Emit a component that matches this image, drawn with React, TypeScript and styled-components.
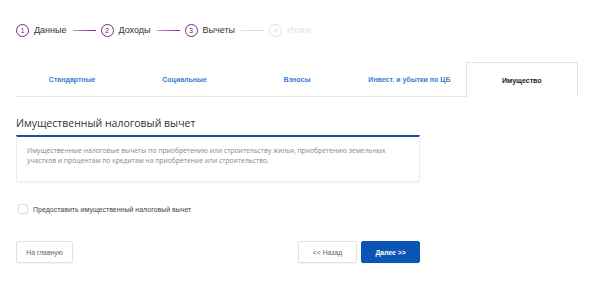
import React, { useState } from 'react'
import styled, { createGlobalStyle } from 'styled-components'

const GlobalStyle = createGlobalStyle`
  html, body {
    margin: 0;
    padding: 0;
    background: #ffffff;
    font-family: "Liberation Sans", Arial, sans-serif;
  }
  * { box-sizing: border-box; }
`

const Page = styled.div`
  width: 600px;
  height: 291px;
  padding: 0 22px 0 16px;
  overflow: hidden;
`

const Stepper = styled.div`
  display: flex;
  align-items: center;
  height: 36px;
  margin-top: 12px;
`

const Step = styled.div<{ $done: boolean }>`
  display: flex;
  align-items: center;
  gap: 5px;
  font-size: 9px;
  color: ${p => (p.$done ? '#333333' : '#e2e2e2')};
`

const StepCircle = styled.span<{ $done: boolean }>`
  width: 13px;
  height: 13px;
  border-radius: 50%;
  border: 1.5px solid ${p => (p.$done ? '#8a1c8e' : '#e4e4e4')};
  color: ${p => (p.$done ? '#333333' : '#e4e4e4')};
  font-size: 6.5px;
  display: flex;
  align-items: center;
  justify-content: center;
`

const StepLine = styled.span<{ $done: boolean }>`
  width: 23px;
  height: 1px;
  margin: 0 5px 0 6px;
  background: ${p => (p.$done ? 'linear-gradient(90deg, #c59cc6, #8a1c8e)' : '#dddddd')};
`

const Tabs = styled.div`
  display: grid;
  grid-template-columns: repeat(5, 1fr);
  margin-top: 14px;
  height: 35px;
`

const Tab = styled.div<{ $active: boolean }>`
  display: flex;
  align-items: center;
  justify-content: center;
  font-size: 7px;
  font-weight: bold;
  color: ${p => (p.$active ? '#222222' : '#2f7fd1')};
  ${p =>
    p.$active
      ? 'border: 1px solid #e3e3e3; border-bottom: none;'
      : 'border-bottom: 1px solid #e6e6e6;'}
  padding-top: 1px;
`

const Section = styled.div`
  width: 404px;
  margin-top: 18px;
`

const Heading = styled.h2`
  margin: 0;
  font-family: "Open Sans", "Liberation Sans", sans-serif;
  font-weight: normal;
  font-size: 10.5px;
  color: #333333;
  line-height: 16px;
  padding-bottom: 4px;
`

const InfoBox = styled.div`
  border-top: 2px solid #1b4ea3;
  border-left: 1px solid #ececec;
  border-right: 1px solid #ececec;
  border-bottom: 1px solid #ececec;
  box-shadow: 0 1px 2px rgba(0, 0, 0, 0.04);
  padding: 9px 24px 0 10px;
  height: 47px;
  font-family: "Open Sans", "Liberation Sans", sans-serif;
  font-size: 6.75px;
  line-height: 10px;
  color: #888888;
`

const CheckRow = styled.label`
  display: flex;
  align-items: center;
  gap: 5px;
  margin-top: 22px;
  margin-left: 2px;
  font-size: 7px;
  color: #444444;
  cursor: pointer;
`

const Box = styled.span<{ $checked: boolean }>`
  width: 10px;
  height: 10px;
  border: 1px solid #dcdcdc;
  border-radius: 2px;
  background: ${p => (p.$checked ? '#0b56b5' : '#ffffff')};
`

const Buttons = styled.div`
  display: flex;
  width: 404px;
  margin-top: 27px;
  gap: 4px;
`

const Button = styled.button<{ $primary?: boolean }>`
  height: 22px;
  padding: 0;
  width: 59px;
  border-radius: 2px;
  font-family: "Liberation Sans", Arial, sans-serif;
  font-size: 6.8px;
  font-weight: ${p => (p.$primary ? 'bold' : 'normal')};
  color: ${p => (p.$primary ? '#ffffff' : '#666666')};
  background: ${p => (p.$primary ? '#0b56b5' : '#ffffff')};
  border: 1px solid ${p => (p.$primary ? '#0b56b5' : '#e2e2e2')};
  box-shadow: 0 1px 2px rgba(0, 0, 0, 0.06);
`

const HomeButton = styled(Button)`
  width: 57px;
`

const Spacer = styled.div`
  flex: 1;
`

const steps = ['Данные', 'Доходы', 'Вычеты', 'Итоги']
const tabs = ['Стандартные', 'Социальные', 'Взносы', 'Инвест. и убытки по ЦБ', 'Имущество']

export default function App() {
  const [checked, setChecked] = useState(false)
  return (
    <Page>
      <GlobalStyle />
      <Stepper>
        {steps.map((s, i) => (
          <React.Fragment key={s}>
            {i > 0 && <StepLine $done={i < 3} />}
            <Step $done={i < 3}>
              <StepCircle $done={i < 3}>{i + 1}</StepCircle>
              {s}
            </Step>
          </React.Fragment>
        ))}
      </Stepper>
      <Tabs>
        {tabs.map((t, i) => (
          <Tab key={t} $active={i === 4}>{t}</Tab>
        ))}
      </Tabs>
      <Section>
        <Heading>Имущественный налоговый вычет</Heading>
        <InfoBox>
          Имущественные налоговые вычеты по приобретению или строительству жилья, приобретению земельных
          участков и процентам по кредитам на приобретение или строительство.
        </InfoBox>
      </Section>
      <CheckRow onClick={() => setChecked(!checked)}>
        <Box $checked={checked} />
        Предоставить имущественный налоговый вычет
      </CheckRow>
      <Buttons>
        <HomeButton>На главную</HomeButton>
        <Spacer />
        <Button>&lt;&lt; Назад</Button>
        <Button $primary>Далее &gt;&gt;</Button>
      </Buttons>
    </Page>
  )
}
